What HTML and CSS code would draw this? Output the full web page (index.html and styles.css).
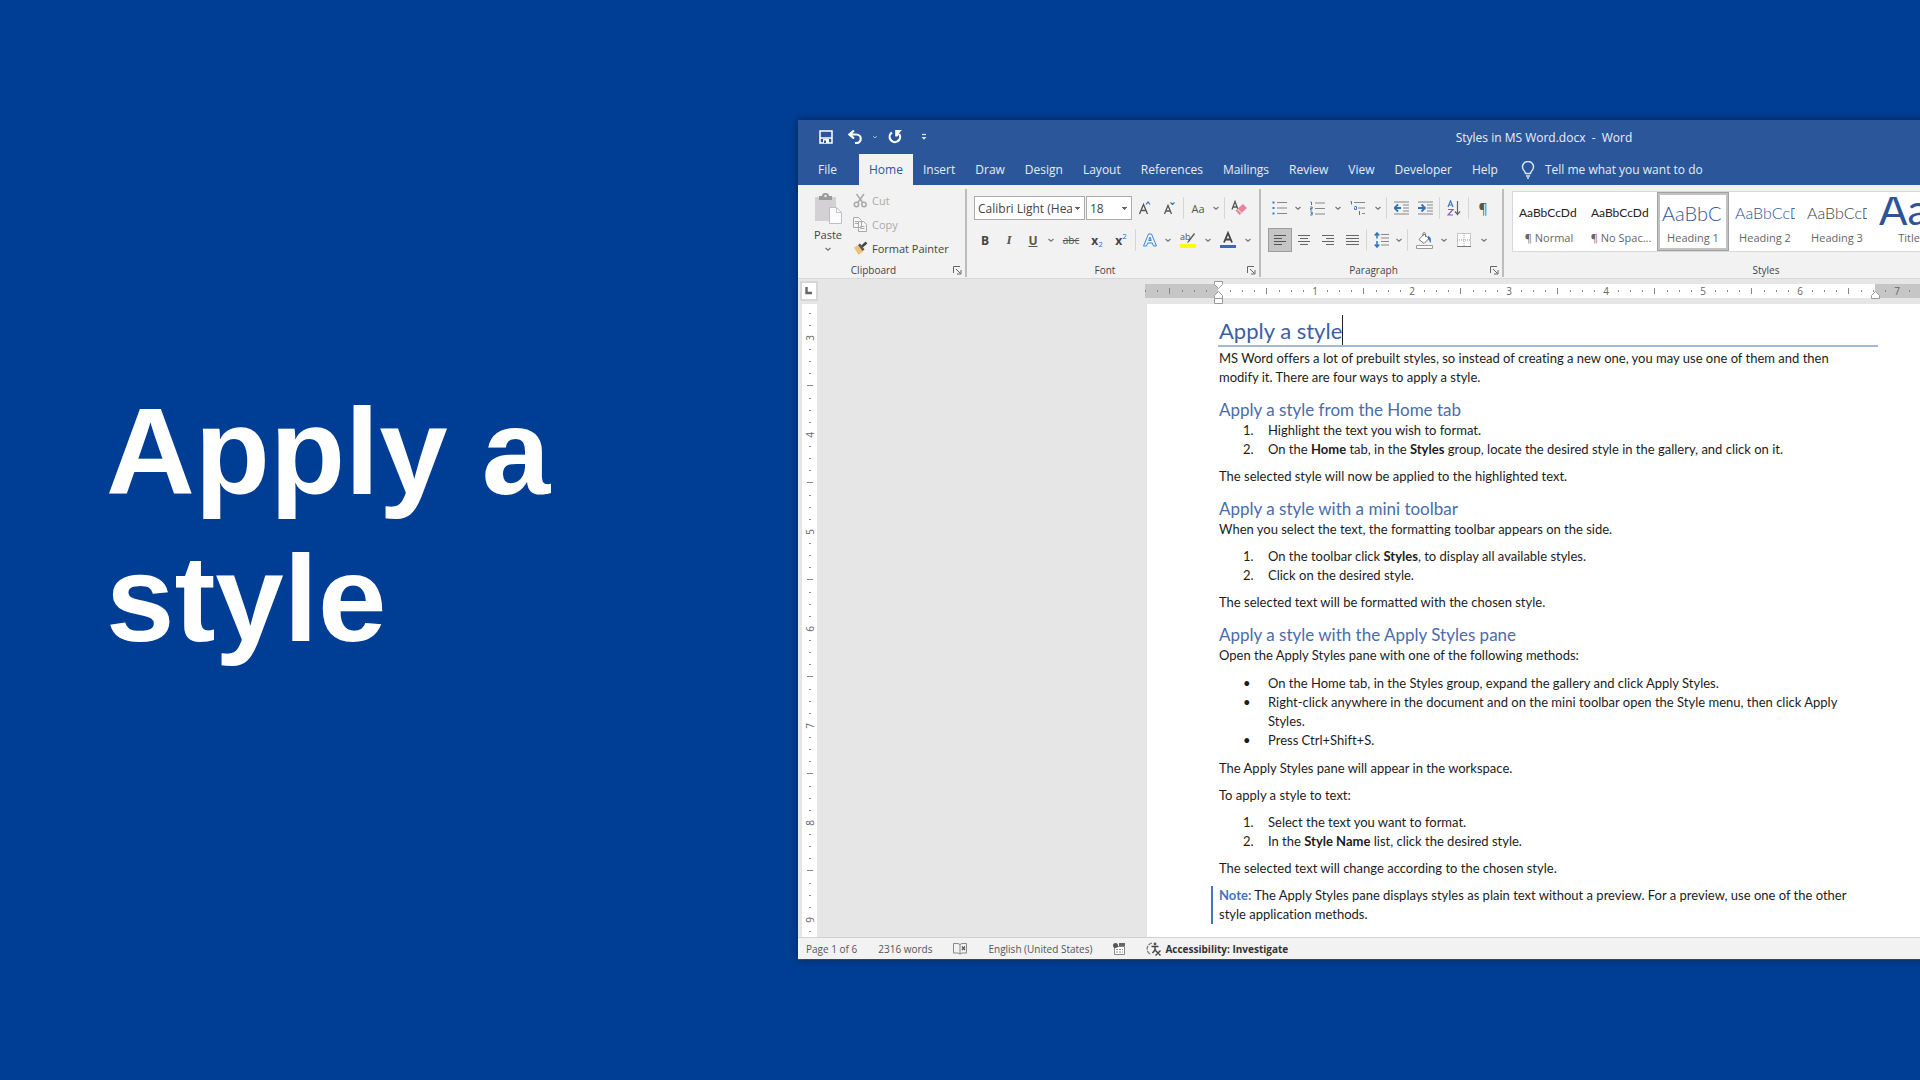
FILE: index.html
```html
<!DOCTYPE html>
<html lang="en">
<head>
<meta charset="utf-8">
<meta name="viewport" content="width=device-width, initial-scale=1">
<title>Apply a style</title>
<link rel="stylesheet" href="styles.css">
</head>
<body>
<svg class="defs" aria-hidden="true">
  <symbol id="chev" viewBox="0 0 8 8"><path d="M1.5 3 4 5.2 6.5 3" fill="none" stroke="#777" stroke-width="1.2"/></symbol>
  <symbol id="launch" viewBox="0 0 9 9"><path d="M.5 7V.5H7M3 3l4.500 4.500M8 4v4H4" fill="none" stroke="#666"/></symbol>
</svg>
<main class="slide">
  <h1 class="slide-title">Apply a style</h1>

  <section class="window" aria-label="Word">
    <header class="titlebar">
      <div class="quick">
        <button class="q24" aria-label="Save"><svg width="14" height="14" viewBox="0 0 14 14"><path d="M1 1h12v12H1zM1 8h12" fill="none" stroke="#fff" stroke-width="1.500"/><path d="M4 9h6v4H4z" fill="#fff"/><path d="M5 10.500h2V13H5z" fill="#2b579a"/></svg></button>
        <button class="q34" aria-label="Undo"><svg width="15" height="14" viewBox="0 0 15 14"><path d="M6 .5 1.500 4.500 6 8.500M2 4.500h6.500a4.200 4.200 0 0 1 0 8.500H7" fill="none" stroke="#fff" stroke-width="2.200"/></svg></button>
        <button class="q-chev" aria-label="Undo list"><svg width="8" height="8" viewBox="0 0 8 8"><path d="M1.500 3 4 5.200 6.500 3" fill="none" stroke="#b9cbe8" stroke-width="1.200"/></svg></button>
        <button class="q34" aria-label="Repeat"><svg width="14" height="14" viewBox="0 0 14 14"><path d="M4 2.500A5.200 5.200 0 1 0 11.200 4" fill="none" stroke="#fff" stroke-width="2.200"/><path d="M7.200 0H14L12.200 1.800 9.500 6.500H7.200z" fill="#fff"/></svg></button>
        <button class="q24" aria-label="Customize"><svg width="6" height="8" viewBox="0 0 6 8"><path d="M1 1.500h4" stroke="#dce6f5" stroke-width="1.200"/><path d="M.5 4h5L3 6.800z" fill="#dce6f5"/></svg></button>
      </div>
      <p class="doc-name">Styles in MS Word.docx&nbsp; - &nbsp;Word</p>
    </header>

    <nav class="tabs">
      <button class="tab file">File</button>
      <button class="tab active">Home</button>
      <button class="tab">Insert</button>
      <button class="tab">Draw</button>
      <button class="tab">Design</button>
      <button class="tab">Layout</button>
      <button class="tab">References</button>
      <button class="tab">Mailings</button>
      <button class="tab">Review</button>
      <button class="tab">View</button>
      <button class="tab">Developer</button>
      <button class="tab">Help</button>
      <button class="tab tell"><svg width="14" height="18" viewBox="0 0 14 18"><path d="M4.500 12.500c0-2.500-3-3-3-6.500a5.300 5.300 0 0 1 11 0c0 3.500-3 4-3 6.500zM5 15h4M6 17h2" fill="none" stroke="#dfe8f6" stroke-width="1.400"/></svg>Tell me what you want to do</button>
    </nav>

    <div class="ribbon">
      <section class="group clipboard">
        <div class="clip-body">
          <button class="paste">
            <svg width="28" height="32" viewBox="0 0 28 32"><path d="M1 4h21v24H1z" fill="#d3d1d4"/><path d="M5 3h3a3.500 3 0 0 1 7 0h3v4H5z" fill="#9a9a9a"/><circle cx="11.500" cy="3" r="1.200" fill="#f2f2f2"/><path d="M15.500 14.500h7l5 5v11h-12z" fill="#fdfbfe" stroke="#bfbcc2"/><path d="M22.500 14.500v5h5" fill="none" stroke="#bfbcc2"/></svg>
            <span>Paste</span>
            <svg width="8" height="8"><use href="#chev"/></svg>
          </button>
          <div class="clip-list">
            <button class="cmd off"><svg width="15" height="15" viewBox="0 0 15 15"><g fill="none" stroke="#a9a9a9" stroke-width="1.500"><path d="M3.500 1 10 10M11 1 4.500 10"/><circle cx="3.500" cy="11.500" r="2.200"/><circle cx="11" cy="11.500" r="2.200"/></g></svg>Cut</button>
            <button class="cmd off"><svg width="15" height="15" viewBox="0 0 15 15"><g fill="#f6f6f6" stroke="#a9a9a9"><path d="M.5.5h5l3 3v7h-8zM5.500 4.500h5l3 3v7h-8z"/><path d="M2 4.500h3M2 6.500h3M7.500 9.500h4M7.500 11.500h4"/></g></svg>Copy</button>
            <button class="cmd"><svg width="15" height="15" viewBox="0 0 15 15"><path d="M1 6.500 5 4l5 6.500L5.500 14z" fill="#f0c078"/><path d="m5 4 2-1.500 4.500 6L9.500 10z" fill="#555"/><path d="m9 5.500 4.500-4" stroke="#444" stroke-width="2.400"/></svg>Format Painter</button>
          </div>
        </div>
        <footer class="group-foot"><span>Clipboard</span><button class="launch" aria-label="Clipboard options"><svg width="9" height="9"><use href="#launch"/></svg></button></footer>
      </section>

      <section class="group font">
        <div class="rows">
          <div class="row first">
            <select class="box face" aria-label="Font"><option>Calibri Light (Hea</option></select>
            <select class="box size" aria-label="Font size"><option>18</option></select>
            <button class="w24 grey" aria-label="Grow font"><svg width="14" height="14" viewBox="0 0 14 14"><path d="M1.500 13 5.500 3.500 9.500 13M3 9.500h5" fill="none" stroke="#555" stroke-width="1.300"/><path d="M8 3.500 10 1l2 2.500" fill="none" stroke="#2e74b5" stroke-width="1.200"/></svg></button>
            <button class="w24 grey" aria-label="Shrink font"><svg width="14" height="14" viewBox="0 0 14 14"><path d="M2.500 13 6 4.500 9.500 13M3.500 10h5" fill="none" stroke="#555" stroke-width="1.300"/><path d="M8.500 1.500 10.500 3.500l2-2" fill="none" stroke="#2e74b5" stroke-width="1.200"/></svg></button>
            <i class="sep"></i>
            <button class="w24 glyph">Aa</button><button class="w12" aria-label="Change case"><svg width="8" height="8"><use href="#chev"/></svg></button>
            <i class="sep"></i>
            <button class="w24" aria-label="Clear formatting"><svg width="16" height="16" viewBox="0 0 16 16"><path d="M1 9.500 4 1.500 7 9.500M2 7h4" fill="none" stroke="#555" stroke-width="1.300"/><path d="m4.500 10.500 7.500-6.500L16 8l-7.500 7z" fill="#e8849a"/><path d="m6.500 9 4 4" stroke="#f2f2f2"/></svg></button>
          </div>
          <div class="row">
            <button class="w24 glyph b">B</button><button class="w24 glyph i">I</button><button class="w24 glyph u">U</button><button class="w12" aria-label="Underline style"><svg width="8" height="8"><use href="#chev"/></svg></button>
            <button class="w28 glyph s">abc</button><button class="w24 glyph b">x<sub>2</sub></button><button class="w24 glyph b">x<sup>2</sup></button>
            <i class="sep"></i>
            <button class="w24" aria-label="Text effects"><svg width="16" height="16" viewBox="0 0 16 16"><path d="M1.500 14 6.500 2h3l5 12h-3l-1.200-3H5.700l-1.200 3zM6.700 8.500h2.600L8 5z" fill="#eaf3fc" stroke="#3f86cf"/></svg></button><button class="w12" aria-label="Effects list"><svg width="8" height="8"><use href="#chev"/></svg></button>
            <button class="w28" aria-label="Highlight colour"><svg width="18" height="18" viewBox="0 0 18 18"><text x="1" y="9" class="mini">ab</text><path d="m15 2-6 8-1 2 2-1 6-8z" fill="#555"/><path d="M1 13h16v4H1z" fill="#ff0"/></svg></button><button class="w12" aria-label="Highlight list"><svg width="8" height="8"><use href="#chev"/></svg></button>
            <button class="w28" aria-label="Font colour"><svg width="16" height="18" viewBox="0 0 16 18"><path d="M4 11.500 8 2l4 9.500M5.300 8.500h5.400" fill="none" stroke="#444" stroke-width="1.800"/><path d="M0 14h16v3H0z" fill="#3c66c4"/></svg></button><button class="w12" aria-label="Colour list"><svg width="8" height="8"><use href="#chev"/></svg></button>
          </div>
        </div>
        <footer class="group-foot"><span>Font</span><button class="launch" aria-label="Font options"><svg width="9" height="9"><use href="#launch"/></svg></button></footer>
      </section>

      <section class="group para">
        <div class="rows">
          <div class="row first">
            <button class="w24" aria-label="Bullets"><svg width="16" height="14" viewBox="0 0 16 14"><path d="M5 1.500h10M5 7h10M5 12.500h10" stroke="#888"/><path d="M.5.500h2v2h-2zM.5 6h2v2h-2zM.5 11.500h2v2h-2z" fill="#3f78b8"/></svg></button><button class="w12" aria-label="Bullet list"><svg width="8" height="8"><use href="#chev"/></svg></button>
            <button class="w28" aria-label="Numbering"><svg width="16" height="15" viewBox="0 0 16 15"><path d="M5 2h10M5 7.500h10M5 13h10" stroke="#888"/><path d="M.5 1h1v3M.2 6h2v1.500h-2V9h2M.2 11h2v3h-2M1 12.500h1" fill="none" stroke="#3f78b8"/></svg></button><button class="w12" aria-label="Number list"><svg width="8" height="8"><use href="#chev"/></svg></button>
            <button class="w28" aria-label="Multilevel list"><svg width="16" height="14" viewBox="0 0 16 14"><path d="M4 1.500h11M8 7h7M12 12.500h3" stroke="#888"/><path d="M.5.500h1v3M4.500 5.500h2v3h-2v-2M9.500 10v4" fill="none" stroke="#3f78b8"/></svg></button><button class="w12" aria-label="Level list"><svg width="8" height="8"><use href="#chev"/></svg></button>
            <i class="sep"></i>
            <button class="w24" aria-label="Decrease indent"><svg width="15" height="14" viewBox="0 0 15 14"><path d="M0 1h15M9 4h6M9 7h6M9 10h6M0 13h15" stroke="#888"/><path d="M4 3.500.5 7 4 10.500M1 7h6" fill="none" stroke="#2f72b8" stroke-width="1.800"/></svg></button><button class="w24" aria-label="Increase indent"><svg width="15" height="14" viewBox="0 0 15 14"><path d="M0 1h15M9 4h6M9 7h6M9 10h6M0 13h15" stroke="#888"/><path d="M3.500 3.500 7 7l-3.500 3.500M0 7h6" fill="none" stroke="#2f72b8" stroke-width="1.800"/></svg></button>
            <i class="sep"></i>
            <button class="w24" aria-label="Sort"><svg width="14" height="16" viewBox="0 0 14 16"><path d="M1 7 3.500.8 6 7M2 5h3" fill="none" stroke="#3f78b8" stroke-width="1.200"/><path d="M1 9.500h5l-5 5.500h5" fill="none" stroke="#8e5bb0" stroke-width="1.200"/><path d="M10.500 1v13M8 11.500l2.500 3 2.500-3" fill="none" stroke="#666" stroke-width="1.200"/></svg></button>
            <i class="sep"></i>
            <button class="w24 glyph pil">¶</button>
          </div>
          <div class="row">
            <button class="w24 on" aria-label="Align left"><svg width="12" height="12" viewBox="0 0 12 12"><path d="M0 1.500h12M0 4.500h8M0 7.500h12M0 10.500h8" stroke="#555"/></svg></button><button class="w24" aria-label="Centre"><svg width="12" height="12" viewBox="0 0 12 12"><path d="M0 1.500h12M2 4.500h8M0 7.500h12M2 10.500h8" stroke="#666"/></svg></button><button class="w24" aria-label="Align right"><svg width="12" height="12" viewBox="0 0 12 12"><path d="M0 1.500h12M4 4.500h8M0 7.500h12M4 10.500h8" stroke="#666"/></svg></button><button class="w24" aria-label="Justify"><svg width="13" height="12" viewBox="0 0 13 12"><path d="M0 1.500h13M0 4.500h13M0 7.500h13M0 10.500h13" stroke="#666"/></svg></button>
            <i class="sep"></i>
            <button class="w24" aria-label="Line spacing"><svg width="15" height="16" viewBox="0 0 15 16"><path d="M7 2.500h8M7 6h8M7 9.500h8M7 13h8" stroke="#888"/><path d="M3 1v5.500M3 9v6M.7 3.500 3 1l2.300 2.500M.7 12.500 3 15l2.300-2.500" fill="none" stroke="#2f72b8" stroke-width="1.500"/></svg></button><button class="w12" aria-label="Spacing list"><svg width="8" height="8"><use href="#chev"/></svg></button>
            <i class="sep"></i>
            <button class="w28" aria-label="Shading"><svg width="17" height="17" viewBox="0 0 17 17"><path d="M3 7.500 8 2l5 4.500-5 5zM7 4V1.500a1.300 1.300 0 0 1 2.500 0V5" fill="#fff" stroke="#777"/><path d="M12 4c3 1 3.500 4 2.500 7-1-1.500-1.200-3-2.500-4z" fill="#2f72b8"/><path d="M.5 13.500h16v3H.5z" fill="#fff" stroke="#999"/></svg></button><button class="w12" aria-label="Shading list"><svg width="8" height="8"><use href="#chev"/></svg></button>
            <button class="w28" aria-label="Borders"><svg width="14" height="14" viewBox="0 0 14 14"><path d="M.5.500h13v13H.5zM7 0v14M0 7h14" fill="#fff" stroke="#999" stroke-dasharray="1 1"/><path d="M0 13.500h14" stroke="#777"/></svg></button><button class="w12" aria-label="Border list"><svg width="8" height="8"><use href="#chev"/></svg></button>
          </div>
        </div>
        <footer class="group-foot"><span>Paragraph</span><button class="launch" aria-label="Paragraph options"><svg width="9" height="9"><use href="#launch"/></svg></button></footer>
      </section>

      <section class="group styles">
        <div class="gallery">
          <button class="style"><span class="sample">AaBbCcDd</span><span class="name">¶ Normal</span></button>
          <button class="style"><span class="sample">AaBbCcDd</span><span class="name">¶ No Spac...</span></button>
          <button class="style chosen"><span class="sample h1">AaBbC</span><span class="name">Heading 1</span></button>
          <button class="style"><span class="sample h2">AaBbCcD</span><span class="name">Heading 2</span></button>
          <button class="style"><span class="sample h3">AaBbCcD</span><span class="name">Heading 3</span></button>
          <button class="style"><span class="sample big">Aa</span><span class="name">Title</span></button>
        </div>
        <footer class="group-foot"><span>Styles</span></footer>
      </section>
    </div>

    <div class="workspace">
      <div class="corner"><svg width="8" height="8" viewBox="0 0 8 8"><path d="M1.500 0v6H7" fill="none" stroke="#666" stroke-width="2.400"/></svg></div>
      <svg class="hruler" aria-hidden="true">
        <defs>
          <pattern id="ht" x="73" width="97" height="25" patternUnits="userSpaceOnUse">
            <path d="M12 11h1v2h-1zM24 11h1v2h-1zM36 11h1v2h-1zM48 9h1v6h-1zM61 11h1v2h-1zM73 11h1v2h-1zM85 11h1v2h-1z" fill="#888"/>
          </pattern>
        </defs>
        <rect y="5" width="100%" height="14" fill="#c6c6c6"/>
        <rect x="73" y="5" width="657" height="14" fill="#fff"/>
        <rect y="5" width="100%" height="14" fill="url(#ht)"/>
        <g class="ticks"><text x="170" y="16">1</text><text x="267" y="16">2</text><text x="364" y="16">3</text><text x="461" y="16">4</text><text x="558" y="16">5</text><text x="655" y="16">6</text><text x="752" y="16">7</text></g>
        <g fill="#fff" stroke="#999"><path d="M69.500 2.500h8v3l-4 4-4-4zM73.500 12.500l4 4v3h-8v-3zM69.500 19.500h8v5h-8zM730.500 12.500l4 4v3h-8v-3z"/></g>
      </svg>
      <svg class="vruler" aria-hidden="true">
        <defs>
          <pattern id="vt" y="33" width="15" height="97" patternUnits="userSpaceOnUse">
            <path d="M7 12h2v1H7zM7 24h2v1H7zM7 36h2v1H7zM5 48h6v1H5zM7 61h2v1H7zM7 73h2v1H7zM7 85h2v1H7z" fill="#888"/>
          </pattern>
        </defs>
        <rect width="15" height="100%" fill="#fff"/>
        <rect width="15" height="100%" fill="url(#vt)"/>
        <g class="ticks"><text transform="translate(12 34) rotate(-90)">3</text><text transform="translate(12 131) rotate(-90)">4</text><text transform="translate(12 228) rotate(-90)">5</text><text transform="translate(12 325) rotate(-90)">6</text><text transform="translate(12 422) rotate(-90)">7</text><text transform="translate(12 519) rotate(-90)">8</text><text transform="translate(12 616) rotate(-90)">9</text></g>
      </svg>
      <article class="page">
        <h2>Apply a style<span class="caret"></span></h2>
        <p>MS Word offers a lot of prebuilt styles, so instead of creating a new one, you may use one of them and then modify it. There are four ways to apply a style.</p>
        <h3>Apply a style from the Home tab</h3>
        <ol>
          <li>Highlight the text you wish to format.</li>
          <li>On the <strong>Home</strong> tab, in the <strong>Styles</strong> group, locate the desired style in the gallery, and click on it.</li>
        </ol>
        <p>The selected style will now be applied to the highlighted text.</p>
        <h3>Apply a style with a mini toolbar</h3>
        <p>When you select the text, the formatting toolbar appears on the side.</p>
        <ol>
          <li>On the toolbar click <strong>Styles</strong>, to display all available styles.</li>
          <li>Click on the desired style.</li>
        </ol>
        <p>The selected text will be formatted with the chosen style.</p>
        <h3>Apply a style with the Apply Styles pane</h3>
        <p>Open the Apply Styles pane with one of the following methods:</p>
        <ul>
          <li>On the Home tab, in the Styles group, expand the gallery and click Apply Styles.</li>
          <li>Right-click anywhere in the document and on the mini toolbar open the Style menu, then click Apply Styles.</li>
          <li>Press Ctrl+Shift+S.</li>
        </ul>
        <p>The Apply Styles pane will appear in the workspace.</p>
        <p>To apply a style to text:</p>
        <ol>
          <li>Select the text you want to format.</li>
          <li>In the <strong>Style Name</strong> list, click the desired style.</li>
        </ol>
        <p>The selected text will change according to the chosen style.</p>
        <p class="note"><strong>Note:</strong> The Apply Styles pane displays styles as plain text without a preview. For a preview, use one of the other style application methods.</p>
      </article>
    </div>

    <footer class="status">
      <span>Page 1 of 6</span>
      <span>2316 words</span>
      <svg width="14" height="13" viewBox="0 0 14 13"><path d="M7 2.500V12M.5 1.500H5l2 1 2-1h4.500v9.500H9l-2 1-2-1H.5z" fill="none" stroke="#888"/><path d="m9 4.500 3 3.500M12 4.500 9 8" stroke="#555" stroke-width="1.200"/></svg>
      <span>English (United States)</span>
      <svg width="12" height="12" viewBox="0 0 12 12"><path d="M1.500 3.500h10v8h-10z" fill="#fff" stroke="#888"/><path d="M3 6.500h7M3 9h7" stroke="#888" stroke-dasharray="2 1"/><path d="M6 0h6v3H6z" fill="#666"/><circle cx="2.500" cy="2.500" r="2.500" fill="#555"/></svg>
      <button class="access"><svg width="15" height="14" viewBox="0 0 15 14"><path d="M6 1A6 6 0 0 0 5 12.500" fill="none" stroke="#777" stroke-width="1.200" stroke-dasharray="4 1"/><circle cx="9" cy="2" r="1.400" fill="#555"/><path d="M5.500 4.500h7M9 4.500V8l-2.500 3M9 7.500l1 1M9.500 8.500l5 5M14.500 8.500l-5 5" fill="none" stroke="#444" stroke-width="1.400"/></svg>Accessibility: Investigate</button>
    </footer>
  </section>
</main>
</body>
</html>
```
FILE: styles.css
```css
* { box-sizing: border-box; }

body, h1, h2, h3, p, ol, ul { margin: 0; padding: 0; }

body {
  background: #003e95;
  font-family: "Open Sans", "Noto Sans", sans-serif;
  font-size: 12px;
  color: #444;
}

button {
  display: flex;
  flex: none;
  align-items: center;
  justify-content: center;
  padding: 0;
  border: 0;
  background: none;
  font: inherit;
  color: inherit;
  white-space: nowrap;
}

.defs { display: none; }

.slide {
  display: flex;
  align-items: flex-start;
  min-height: 100vh;
  overflow: hidden;
}

.slide-title {
  flex: 0 0 692px;
  margin: 378px 0 0 106px;
  padding-right: 180px;
  font: bold 123px/147px "Liberation Sans", Arial, sans-serif;
  color: #fff;
}

.window {
  flex: 0 0 1492px;
  margin: 120px 0;
  background: #f2f2f2;
  box-shadow: 0 0 8px rgba(0, 0, 0, .45), 0 1px 1px #555;
}

/* Title bar and tabs */
.titlebar {
  display: grid;
  align-items: center;
  height: 34px;
  background: #2b579a;
  color: #e9f0fa;
}
.titlebar > * { grid-area: 1 / 1; }
.quick { display: flex; padding-left: 16px; }
.q24 { width: 24px; }
.q34 { width: 34px; }
.q-chev { width: 6px; }
.doc-name { text-align: center; }

.tabs {
  display: flex;
  height: 31px;
  background: #2b579a;
  color: #e4ecf8;
}
.tab { padding: 0 10px; }
.file { width: 61px; padding-right: 12px; }
.tab.active { background: #f2f2f2; color: #2b579a; }
.tell { gap: 10px; padding-left: 13px; }

/* Ribbon */
.ribbon {
  display: flex;
  height: 94px;
  padding: 4px 0 1px;
  border-bottom: 1px solid #d8d8d8;
  font-size: 11px;
}
.group {
  display: flex;
  flex: none;
  flex-direction: column;
  justify-content: space-between;
  border-right: 2px solid #bdbdbd;
}
.clipboard { width: 169px; }
.font { width: 294px; }
.para { width: 243px; }
.styles { width: 542px; }

.group-foot {
  display: grid;
  grid-template-columns: 1fr 16px;
  height: 14px;
  font-size: 10px;
  line-height: 14px;
}
.group-foot span { text-align: center; }

.clip-body { display: flex; padding-left: 8px; }
.paste { flex-direction: column; width: 44px; padding-top: 4px; justify-content: flex-start; }
.paste span { line-height: 20px; }
.clip-list { display: flex; flex-direction: column; }
.cmd { gap: 4px; height: 24px; padding-left: 3px; justify-content: flex-start; }
.cmd:first-child { height: 23px; }
.off { color: #aaa; }

.rows { display: flex; flex-direction: column; gap: 8px; padding: 7px 0 0 6px; }
.row { display: flex; align-items: center; height: 24px; }
.para .rows { padding-left: 7px; }
.w12 { width: 12px; }
.w24 { width: 24px; height: 24px; }
.w28 { width: 28px; height: 24px; }
.sep { flex: none; width: 1px; height: 22px; margin: 0 2px; background: #d6d6d6; }
.glyph { color: #555; }
.b { font-size: 12px; font-weight: 700; color: #444; }
.i { font: italic bold 13px "Liberation Serif", serif; }
.u { font-size: 12px; font-weight: 700; text-decoration: underline; }
.s { text-decoration: line-through; font-size: 10px; }
.pil { font-size: 14px; }
sub, sup { font-size: 8px; line-height: 8px; color: #2e74b5; font-weight: 400; }
sub { align-self: flex-end; padding-bottom: 4px; }
sup { align-self: flex-start; padding-top: 4px; }
.mini { font-size: 9px; fill: #555; }
.on { background: #c5c5c5; border: 1px solid #9c9c9c; }

.box {
  flex: none;
  height: 24px;
  margin-right: 1px;
  padding: 0 12px 0 3px;
  appearance: none;
  border: 1px solid #ababab;
  border-radius: 0;
  background: linear-gradient(#666, #666) no-repeat right 4px top 10px / 5px 1px, linear-gradient(#666, #666) no-repeat right 5px top 11px / 3px 1px, linear-gradient(#666, #666) no-repeat right 6px top 12px / 1px 1px, #fff;
  font: 12px "Open Sans", "Noto Sans", sans-serif;
  color: #444;
}
.first .box:first-child { margin-left: 1px; }
.face { width: 111px; }
.size { width: 46px; }

.gallery {
  display: flex;
  height: 61px;
  margin: 2px 0 0 8px;
  border: 1px solid #d8d8d8;
  background: #fff;
}
.style {
  flex: 0 0 72px;
  flex-direction: column;
  min-width: 0;
  padding: 0 6px;
  color: #666;
}
.sample {
  width: 100%;
  height: 32px;
  overflow: hidden;
  font: 12px/32px Lato, sans-serif;
  color: #222;
  text-align: left;
}
.style .name { line-height: 18px; }
.sample.h1, .sample.h2, .sample.h3, .sample.big { font-weight: 300; color: #2f5496; }
.sample.h1 { font-size: 20px; }
.sample.h2, .sample.h3 { font-size: 16px; }
.sample.h3 { color: #444; }
.sample.big { font-size: 42px; font-weight: 400; line-height: 24px; }
.style.chosen { border: 3px solid #c2c2c2; outline: 1px solid #a2a2a2; outline-offset: -1px; padding: 0 2px; }

/* Workspace */
.workspace {
  display: grid;
  grid-template-columns: 20px 1fr;
  grid-template-rows: 25px auto;
  background: #e6e6e6;
}
.corner {
  display: flex;
  align-items: center;
  justify-content: center;
  margin: 2px 0 3px 2px;
  border: 2px solid #d6d6d6;
  background: #fff;
}
.hruler { width: calc(100% - 327px); height: 25px; margin-left: 327px; }
.vruler { width: 15px; height: 100%; margin-left: 4px; }
.ticks { font-size: 10px; fill: #666; text-anchor: middle; }

.page {
  margin-left: 329px;
  padding: 11px 0 13px 72px;
  background: #fff;
  font: 13px/19px Lato, sans-serif;
  font-variant-ligatures: none;
  color: #1c1c1c;
}
.page h2 {
  width: 660px;
  height: 32px;
  margin-left: -1px;
  margin-bottom: 2px;
  padding-left: 1px;
  border-bottom: 2px solid #a5b7dc;
  font-size: 22px;
  line-height: 32px;
  font-weight: 400;
  color: #3b5fa3;
}
.caret { display: inline-block; width: 1px; height: 30px; background: #222; vertical-align: top; }
.page h3 {
  margin-top: 12px;
  font-size: 17px;
  line-height: 22px;
  font-weight: 400;
  color: #4a6cab;
}
.page p, .page ul, .page ol { max-width: 640px; }
p + p, p + ol, ol + p { margin-top: 8px; }
p + ul, ul + p { margin-top: 9px; }
.page ol, .page ul { padding-left: 24px; list-style: none; counter-reset: step; }
.page li { padding-left: 25px; text-indent: -25px; counter-increment: step; }
.page li::before { content: counter(step) "."; display: inline-block; width: 25px; text-indent: 0; }
.page ul li::before { content: "•"; }
.page .note { margin-left: -8px; max-width: 648px; padding-left: 6px; border-left: 2px solid #4472c4; }
.note strong { color: #4472c4; }

/* Status bar */
.status {
  display: flex;
  align-items: center;
  gap: 21px;
  height: 22px;
  padding-left: 8px;
  border-top: 1px solid #d2d2d2;
  font-size: 10px;
  color: #555;
}
.access { gap: 4px; font-weight: 700; color: #333; }
```
